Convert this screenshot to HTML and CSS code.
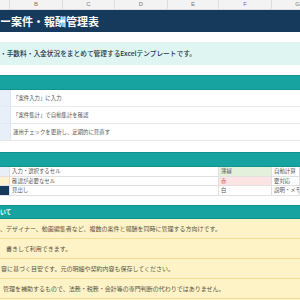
FILE: index.html
```html
<!DOCTYPE html>
<html lang="ja">
<head>
<meta charset="utf-8">
<link rel="stylesheet" href="styles.css">
</head>
<body>
<div class="sheet">
  <div class="colhead">
    <span class="ch ch-a"></span>
    <span class="ch">B</span>
    <span class="ch">C</span>
    <span class="ch">D</span>
    <span class="ch ch-e">E</span>
    <span class="ch">F</span>
    <span class="ch">G</span>
  </div>
  <div class="title">ー案件・報酬管理表</div>
  <div class="lead">・手数料・入金状況をまとめて管理するExcelテンプレートです。</div>

  <div class="band band-steps"></div>
  <div class="step"><span class="num"></span><span class="stxt">「案件入力」に入力</span></div>
  <div class="step"><span class="num"></span><span class="stxt">「案件集計」で自動集計を確認</span></div>
  <div class="step"><span class="num"></span><span class="stxt">運用チェックを更新し、定期的に見直す</span></div>

  <div class="band band-legend"></div>
  <div class="legend">
    <span class="sw sw-blue"></span><span class="ltxt">入力・選択するセル</span><span class="cname c-green">薄緑</span><span class="cdesc">自動計算</span>
    <span class="sw sw-yellow"></span><span class="ltxt">確認が必要なセル</span><span class="cname c-red">赤</span><span class="cdesc">要対応</span>
    <span class="sw sw-navy"></span><span class="ltxt">見出し</span><span class="cname">白</span><span class="cdesc">説明・メモ</span>
  </div>

  <div class="band band-notes">いて</div>
  <div class="note n1">、デザイナー、動画編集者など、複数の案件と報酬を同時に管理する方向けです。</div>
  <div class="note n2">書きして利用できます。</div>
  <div class="note n3">容に基づく目安です。元の明細や契約内容も保存してください。</div>
  <div class="note n4">管理を補助するもので、法務・税務・会計等の専門判断の代わりではありません。</div>
  <div class="note n5"></div>
</div>
</body>
</html>
```

FILE: styles.css
```css
html, body {
  margin: 0;
  padding: 0;
  background: #ffffff;
}
body {
  width: 300px;
  height: 300px;
  overflow: hidden;
  font-family: "Noto Sans CJK JP", "Noto Sans", sans-serif;
}
.sheet {
  width: 300px;
  overflow: hidden;
  white-space: nowrap;
}
.colhead {
  display: grid;
  grid-template-columns: 10px 53px 52px 53px 51px 53px 52px;
  height: 9px;
  background: #f3f3f3;
  border-bottom: 1px solid #dcdcdc;
}
.ch {
  font-family: "Liberation Sans", sans-serif;
  font-size: 6px;
  line-height: 9px;
  color: #777;
  text-align: center;
  border-right: 1px solid #dedede;
}
.title {
  height: 22px;
  background: #163a5c;
  color: #ffffff;
  font-weight: 700;
  font-size: 11px;
  line-height: 22px;
  padding-left: 0;
}
.lead {
  margin-top: 10px;
  height: 23px;
  background: #dff5f2;
  color: #1e3447;
  font-size: 6.7px;
  font-weight: 500;
  line-height: 23px;
}
.band {
  background: #17a39f;
  border-top: 1px solid #13938f;
  border-bottom: 1px solid #13938f;
  color: #ffffff;
  font-weight: 700;
}
.band-steps {
  margin-top: 10px;
  height: 13px;
}
.step {
  display: flex;
  height: 16px;
  border-bottom: 1px solid #e6eaee;
}
.num {
  width: 10px;
  background: #e8eff8;
  border-right: 1px solid #dfe5ec;
}
.stxt {
  padding-left: 2px;
  font-size: 5.4px;
  line-height: 16px;
  color: #555;
}
.band-legend {
  margin-top: 11px;
  height: 13px;
}
.legend {
  display: grid;
  grid-template-columns: 10px 209px 53px 28px;
  grid-auto-rows: 9.5px;
}
.legend > span {
  border-bottom: 1px solid #e0e0e0;
  border-right: 1px solid #e0e0e0;
  font-size: 5.4px;
  line-height: 9px;
  color: #555;
  box-sizing: border-box;
  overflow: hidden;
}
.ltxt, .cname, .cdesc {
  padding-left: 2px;
}
.sw-blue { background: #e8eff8; }
.sw-yellow { background: #fff2cc; }
.sw-navy { background: #163a5c; }
.c-green { background: #e2f0dc; }
.legend > .c-red { background: #fce4e4; color: #d9534f; }
.band-notes {
  margin-top: 9px;
  height: 12px;
  font-size: 5.8px;
  line-height: 12px;
}
.note {
  height: 19px;
  background: #fef3c7;
  border-bottom: 1px solid #f5df95;
  color: #5a5346;
  font-size: 6px;
  line-height: 19px;
}
.n1 { padding-left: 0; }
.n2 { padding-left: 6px; }
.n3 { padding-left: 1px; }
.n4 { padding-left: 3px; }
```
